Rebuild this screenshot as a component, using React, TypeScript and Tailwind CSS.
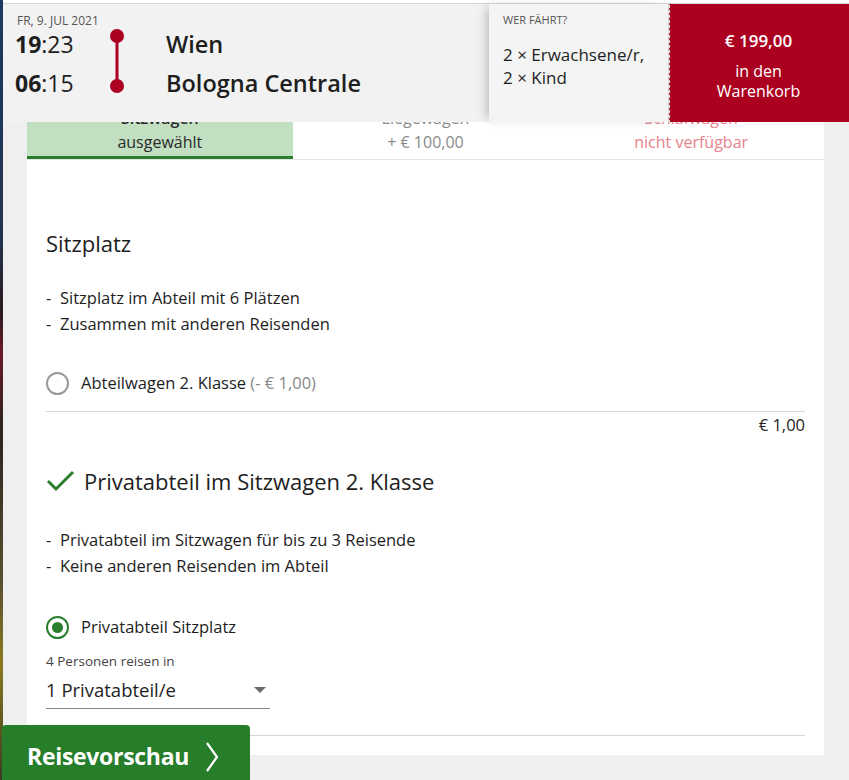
import React from "react";

function Bullet({ children }: { children: React.ReactNode }) {
  return (
    <div className="flex h-[26px] items-center">
      <span className="w-[14px]">-</span>
      <span>{children}</span>
    </div>
  );
}

export default function App() {
  return (
    <div className="relative flex h-[780px] w-full overflow-hidden font-['Open_Sans',sans-serif] text-[#1e1e1e]">
      <div className="w-[3px] shrink-0 bg-[linear-gradient(to_bottom,#1d3a62_0%,#22344f_30%,#2a1a1e_40%,#6b1a2a_45%,#2b2320_55%,#5b5030_75%,#8a7a20_85%,#3a3a20_100%)]" />
      <div className="relative flex-1 bg-[#efefef]">
        {/* Header */}
        <div className="absolute left-0 right-0 top-0 z-10 bg-white pt-[3px]">
          <div className="flex h-[119px] border-t border-[#d4d4d4] bg-[#f2f2f2]">
            <div className="relative w-[486px] shrink-0">
              <div className="absolute left-[14px] top-[9px] text-[12px] leading-[16px] text-[#555]">FR, 9. JUL 2021</div>
              <div className="absolute left-[12px] top-[25px] text-[23px] leading-[30px]">
                <b>19</b>:23
              </div>
              <div className="absolute left-[12px] top-[64px] text-[23px] leading-[30px]">
                <b>06</b>:15
              </div>
              <svg className="absolute left-[104px] top-[24px]" width="20" height="66" viewBox="0 0 20 66">
                <line x1="10" y1="8" x2="10" y2="58" stroke="#ab0020" strokeWidth="3" />
                <circle cx="10" cy="8" r="7" fill="#ab0020" />
                <circle cx="10" cy="58" r="7" fill="#ab0020" />
              </svg>
              <div className="absolute left-[163px] top-[25px] text-[23.5px] font-semibold leading-[30px]">Wien</div>
              <div className="absolute left-[163px] top-[64px] text-[23.5px] font-semibold leading-[30px]">Bologna Centrale</div>
            </div>
            <div className="relative w-[179px] shrink-0 bg-[#f4f4f4] pl-[14px] shadow-[-6px_0_10px_-4px_rgba(0,0,0,0.25)]">
              <div className="mt-[8px] text-[11px] leading-[16px] text-[#555]">WER FÄHRT?</div>
              <div className="mt-[15px] text-[17px] leading-[23px]">
                <div>2 × Erwachsene/r,</div>
                <div>2 × Kind</div>
              </div>
            </div>
            <div className="relative flex flex-1 flex-col items-center bg-[#ab0020] text-white">
              <div className="absolute bottom-0 left-0 top-0 w-[3px] bg-[radial-gradient(circle_at_0_50%,#dcdcdc_2px,transparent_2.6px)] bg-[length:3px_5px]" />
              <div className="mt-[25px] text-[17px] font-semibold leading-[24px]">€ 199,00</div>
              <div className="mt-[8px] text-center text-[16px] leading-[20px]">
                <div>in den</div>
                <div>Warenkorb</div>
              </div>
            </div>
          </div>
        </div>

        {/* Card */}
        <div className="pl-[24px] pr-[25px] pt-[98px]">
          <div className="bg-white pb-[19px]">
            <div className="grid grid-cols-3 border-b border-[#e3e3e3] text-center text-[16px] leading-[24px]">
              <div className="border-b-[3px] border-[#2a7e2e] bg-[#c2dfc2] pb-[2px] pt-[8px] text-[#2a2a2a]">
                <div className="font-semibold">Sitzwagen</div>
                <div>ausgewählt</div>
              </div>
              <div className="pb-[5px] pt-[8px] text-[#8a8a8a]">
                <div>Liegewagen</div>
                <div>+ € 100,00</div>
              </div>
              <div className="pb-[5px] pt-[8px] text-[#e7838d]">
                <div>Schlafwagen</div>
                <div>nicht verfügbar</div>
              </div>
            </div>

            <div className="px-[19px] text-[16.5px]">
              <div className="mt-[68px] text-[22px] leading-[30px]">Sitzplatz</div>
              <div className="mt-[27px]">
                <Bullet>Sitzplatz im Abteil mit 6 Plätzen</Bullet>
                <Bullet>Zusammen mit anderen Reisenden</Bullet>
              </div>
              <div className="mt-[34px] flex h-[24px] items-center">
                <div className="h-[23px] w-[23px] rounded-full border-2 border-[#999]" />
                <div className="ml-[12px]">
                  Abteilwagen 2. Klasse <span className="text-[#888]">(- € 1,00)</span>
                </div>
              </div>
              <div className="mt-[16px] h-px bg-[#d6d6d6]" />
              <div className="mt-[3px] text-right leading-[20px]">€ 1,00</div>

              <div className="mt-[31px] flex h-[30px] items-center">
                <svg width="29" height="22" viewBox="0 0 29 22" className="mr-[9px]">
                  <polyline points="2,11 10,19 27,2" fill="none" stroke="#2a7e2e" strokeWidth="3" />
                </svg>
                <span className="text-[22px] leading-[30px]">Privatabteil im Sitzwagen 2. Klasse</span>
              </div>
              <div className="mt-[31px]">
                <Bullet>Privatabteil im Sitzwagen für bis zu 3 Reisende</Bullet>
                <Bullet>Keine anderen Reisenden im Abteil</Bullet>
              </div>
              <div className="mt-[36px] flex h-[24px] items-center">
                <div className="flex h-[23px] w-[23px] items-center justify-center rounded-full border-2 border-[#2a7e2e]">
                  <div className="h-[11px] w-[11px] rounded-full bg-[#2a7e2e]" />
                </div>
                <div className="ml-[12px]">Privatabteil Sitzplatz</div>
              </div>
              <div className="mt-[14px] text-[13.5px] leading-[16px] text-[#444]">4 Personen reisen in</div>
              <div className="mt-[8px] flex w-[224px] items-center justify-between border-b border-[#888] pb-[5px]">
                <span className="text-[18.5px] leading-[26px]">1 Privatabteil/e</span>
                <svg width="12" height="6" viewBox="0 0 12 6" className="mr-[4px]">
                  <polygon points="0,0 12,0 6,6" fill="#6a6a6a" />
                </svg>
              </div>
              <div className="mt-[26px] h-px bg-[#d6d6d6]" />
            </div>
          </div>
        </div>
      </div>

      {/* Floating button */}
      <div className="absolute left-[2px] top-[725px] flex h-[60px] w-[248px] items-start rounded-t-[4px] bg-[#267d2a] pl-[25px] pt-[16px] text-white">
        <span className="text-[23px] font-bold leading-[30px] tracking-[-0.3px]">Reisevorschau</span>
        <svg width="14" height="30" viewBox="0 0 14 30" className="ml-[16px] mt-[1px]">
          <polyline points="2,1 12,15 2,29" fill="none" stroke="#fff" strokeWidth="2.2" />
        </svg>
      </div>
    </div>
  );
}
